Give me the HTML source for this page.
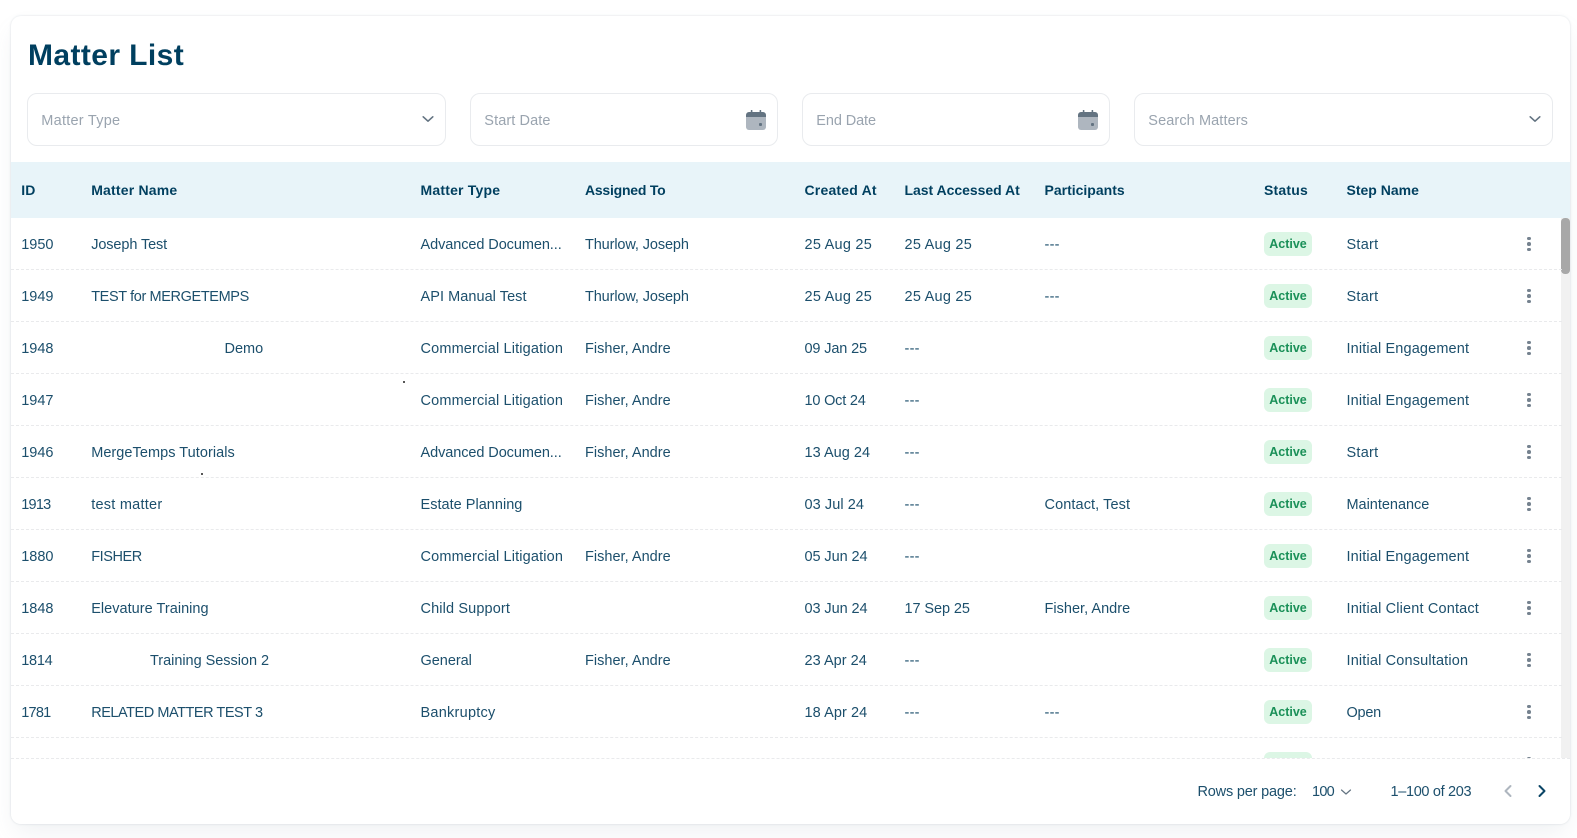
<!DOCTYPE html>
<html lang="en">
<head>
<meta charset="utf-8">
<title>Matter List</title>
<style>
*{box-sizing:border-box}
html,body{margin:0;padding:0;width:1577px;height:838px;overflow:hidden;background:#fff;font-family:"Liberation Sans",sans-serif;color:#1c4f6c}
.card{position:absolute;left:10.5px;top:15.5px;width:1559px;height:808px;background:#fff;border-radius:10px;box-shadow:0 0 2px rgba(145,158,171,.35),0 12px 24px -4px rgba(145,158,171,.14)}
h1{position:absolute;left:28px;top:38px;margin:0;font-size:30px;line-height:36px;font-weight:700;color:#003f5f;letter-spacing:.4px}
.f{position:absolute;top:93px;height:53px;border:1px solid #e9ebee;border-radius:10px;background:#fff}
.f span{position:absolute;left:13.3px;top:17px;font-size:14.5px;line-height:20px;color:#9aa4af;letter-spacing:.25px;white-space:nowrap}
.f svg{position:absolute}
.head{position:absolute;left:10.5px;top:162px;width:1559px;height:56px;background:#e8f4f9}
.t{position:absolute;white-space:nowrap;font-size:14.5px;line-height:20px;letter-spacing:.25px}
.head .t{top:18px;font-weight:700;font-size:14px;color:#003f5f;letter-spacing:.2px}
.body{position:absolute;left:10.5px;top:218px;width:1559px;height:540px;overflow:hidden}
.track{position:absolute;right:0;top:0;width:8.5px;height:540px;background:#f1f1f1}
.thumb{position:absolute;left:0;top:0;width:8.5px;height:56px;border-radius:4px;background:#a8a8a8}
.r{position:absolute;left:0;width:1551px;height:52px;border-bottom:1px dashed #e9eaec}
.r .t{top:17px}
.chip{position:absolute;left:1253.5px;top:14px;width:48px;height:24px;border-radius:6px;background:#dcf6e5;color:#1a9058;font-size:12.5px;font-weight:700;line-height:24px;text-align:center;letter-spacing:0}
.dots{position:absolute;left:1516.7px;top:18.5px;width:3.6px;height:15px}
.dots i{position:absolute;left:0;width:3.6px;height:3.6px;border-radius:50%;background:#75828f}
.dots i:nth-child(1){top:0}.dots i:nth-child(2){top:5.5px}.dots i:nth-child(3){top:11px}
.c1{left:10.7px}.c2{left:80.7px}.c3{left:410px}.c4{left:574.5px}.c5{left:794px}.c6{left:894px}.c7{left:1034px}.c9{left:1336px}
.foot{position:absolute;left:10.5px;top:758px;width:1559px;height:65.5px;background:#fff;border-top:1px dashed #e9eaec;border-radius:0 0 10px 10px}
.foot .t{top:23px}
.foot svg{position:absolute}
.spk{position:absolute;width:2px;height:2px;background:#222;border-radius:50%}
/* fine letter-spacing adjustments */
.a{letter-spacing:-.11px}.b{letter-spacing:-.38px}.d{letter-spacing:0}.e{letter-spacing:.05px}.g{letter-spacing:-.42px}.h{letter-spacing:.03px}.k{letter-spacing:-.03px}.l{letter-spacing:-.46px}
.ad{letter-spacing:-.08px}.cl{letter-spacing:.15px}.es{letter-spacing:.02px}.cs{letter-spacing:.13px}.th{letter-spacing:-.12px}.fa{letter-spacing:.02px}
.n1{letter-spacing:-.14px}.n2{letter-spacing:-.19px}.n3{letter-spacing:.08px}.n4{letter-spacing:-.08px}
.ie{letter-spacing:.14px}.ma{letter-spacing:-.02px}.ic{letter-spacing:.16px}.op{letter-spacing:-.25px}
.i0{letter-spacing:0}.i1{letter-spacing:-.75px}.i2{letter-spacing:-.25px}
</style>
</head>
<body>
<div class="card"></div>
<h1>Matter List</h1>

<div class="f" style="left:27px;width:419px"><span>Matter Type</span>
<svg style="left:394px;top:19px" width="12" height="12" viewBox="0 0 12 12"><path d="M1.2 3.8 6 8.2l4.8-4.4" fill="none" stroke="#637381" stroke-width="1.6" stroke-linecap="round" stroke-linejoin="round"/></svg></div>

<div class="f" style="left:470px;width:308px"><span style="letter-spacing:.1px">Start Date</span>
<svg style="left:275px;top:15.5px" width="20" height="21" viewBox="0 0 20 21"><path d="M0 7h20v10a3 3 0 0 1-3 3H3a3 3 0 0 1-3-3z" fill="#aeb6bf"/><path d="M0 7V5a3 3 0 0 1 3-3h1.8V.6a.8.8 0 0 1 1.6 0V2h7.2V.6a.8.8 0 0 1 1.6 0V2H17a3 3 0 0 1 3 3v2z" fill="#637381"/><rect x="13" y="13" width="3" height="3" rx="1" fill="#637381"/></svg></div>

<div class="f" style="left:802px;width:308px"><span style="letter-spacing:-.1px">End Date</span>
<svg style="left:275px;top:15.5px" width="20" height="21" viewBox="0 0 20 21"><path d="M0 7h20v10a3 3 0 0 1-3 3H3a3 3 0 0 1-3-3z" fill="#aeb6bf"/><path d="M0 7V5a3 3 0 0 1 3-3h1.8V.6a.8.8 0 0 1 1.6 0V2h7.2V.6a.8.8 0 0 1 1.6 0V2H17a3 3 0 0 1 3 3v2z" fill="#637381"/><rect x="13" y="13" width="3" height="3" rx="1" fill="#637381"/></svg></div>

<div class="f" style="left:1134px;width:419px"><span style="letter-spacing:.1px">Search Matters</span>
<svg style="left:394px;top:19px" width="12" height="12" viewBox="0 0 12 12"><path d="M1.2 3.8 6 8.2l4.8-4.4" fill="none" stroke="#637381" stroke-width="1.6" stroke-linecap="round" stroke-linejoin="round"/></svg></div>

<div class="head">
<span class="t c1">ID</span><span class="t c2">Matter Name</span><span class="t c3">Matter Type</span><span class="t c4" style="letter-spacing:-.23px">Assigned To</span><span class="t c5">Created At</span><span class="t c6" style="letter-spacing:-.03px">Last Accessed At</span><span class="t c7" style="letter-spacing:0">Participants</span><span class="t" style="left:1253.5px">Status</span><span class="t c9" style="letter-spacing:0">Step Name</span>
</div>

<div class="body">
<div class="track"><div class="thumb"></div></div>

<div class="r" style="top:0"><span class="t c1 i0">1950</span><span class="t c2 a">Joseph Test</span><span class="t c3 ad">Advanced Documen...</span><span class="t c4 th">Thurlow, Joseph</span><span class="t c5">25 Aug 25</span><span class="t c6">25 Aug 25</span><span class="t c7">---</span><span class="chip">Active</span><span class="t c9">Start</span><span class="dots"><i></i><i></i><i></i></span></div>

<div class="r" style="top:52px"><span class="t c1 i0">1949</span><span class="t c2 b">TEST for MERGETEMPS</span><span class="t c3 e">API Manual Test</span><span class="t c4 th">Thurlow, Joseph</span><span class="t c5">25 Aug 25</span><span class="t c6">25 Aug 25</span><span class="t c7">---</span><span class="chip">Active</span><span class="t c9">Start</span><span class="dots"><i></i><i></i><i></i></span></div>

<div class="r" style="top:104px"><span class="t c1 i0">1948</span><span class="t d" style="left:214px">Demo</span><span class="t c3 cl">Commercial Litigation</span><span class="t c4 fa">Fisher, Andre</span><span class="t c5 n1">09 Jan 25</span><span class="t c6">---</span><span class="chip">Active</span><span class="t c9 ie">Initial Engagement</span><span class="dots"><i></i><i></i><i></i></span></div>

<div class="r" style="top:156px"><span class="t c1 i0">1947</span><span class="t c3 cl">Commercial Litigation</span><span class="t c4 fa">Fisher, Andre</span><span class="t c5 n2">10 Oct 24</span><span class="t c6">---</span><span class="chip">Active</span><span class="t c9 ie">Initial Engagement</span><span class="dots"><i></i><i></i><i></i></span></div>

<div class="r" style="top:208px"><span class="t c1 i0">1946</span><span class="t c2 e">MergeTemps Tutorials</span><span class="t c3 ad">Advanced Documen...</span><span class="t c4 fa">Fisher, Andre</span><span class="t c5 h">13 Aug 24</span><span class="t c6">---</span><span class="chip">Active</span><span class="t c9">Start</span><span class="dots"><i></i><i></i><i></i></span></div>

<div class="r" style="top:260px"><span class="t c1 i1">1913</span><span class="t c2">test matter</span><span class="t c3 es">Estate Planning</span><span class="t c5 n3">03 Jul 24</span><span class="t c6">---</span><span class="t c7" style="letter-spacing:.1px">Contact, Test</span><span class="chip">Active</span><span class="t c9 ma">Maintenance</span><span class="dots"><i></i><i></i><i></i></span></div>

<div class="r" style="top:312px"><span class="t c1 i0">1880</span><span class="t c2 g">FISHER</span><span class="t c3 cl">Commercial Litigation</span><span class="t c4 fa">Fisher, Andre</span><span class="t c5 n4">05 Jun 24</span><span class="t c6">---</span><span class="chip">Active</span><span class="t c9 ie">Initial Engagement</span><span class="dots"><i></i><i></i><i></i></span></div>

<div class="r" style="top:364px"><span class="t c1 i0">1848</span><span class="t c2 h">Elevature Training</span><span class="t c3 cs">Child Support</span><span class="t c5 n4">03 Jun 24</span><span class="t c6 n4">17 Sep 25</span><span class="t c7 fa">Fisher, Andre</span><span class="chip">Active</span><span class="t c9 ic">Initial Client Contact</span><span class="dots"><i></i><i></i><i></i></span></div>

<div class="r" style="top:416px"><span class="t c1 i2">1814</span><span class="t k" style="left:139.500px">Training Session 2</span><span class="t c3 k">General</span><span class="t c4 fa">Fisher, Andre</span><span class="t c5 h">23 Apr 24</span><span class="t c6">---</span><span class="chip">Active</span><span class="t c9 ic">Initial Consultation</span><span class="dots"><i></i><i></i><i></i></span></div>

<div class="r" style="top:468px"><span class="t c1 i1">1781</span><span class="t c2 l">RELATED MATTER TEST 3</span><span class="t c3">Bankruptcy</span><span class="t c5 n3">18 Apr 24</span><span class="t c6">---</span><span class="t c7">---</span><span class="chip">Active</span><span class="t c9 op">Open</span><span class="dots"><i></i><i></i><i></i></span></div>

<div class="r" style="top:520px"><span class="chip">Active</span><span class="dots"><i></i><i></i><i></i></span></div>
</div>

<span class="spk" style="left:403px;top:381px"></span>
<span class="spk" style="left:201px;top:473px"></span>

<div class="foot">
<span class="t" style="left:1187px;letter-spacing:-.18px">Rows per page:</span>
<span class="t" style="left:1301.500px;letter-spacing:-.75px">100</span>
<svg style="left:1329px;top:27px" width="12" height="12" viewBox="0 0 12 12"><path d="M1.500 4 6 8l4.500-4" fill="none" stroke="#637381" stroke-width="1.200" stroke-linecap="round" stroke-linejoin="round"/></svg>
<span class="t" style="left:1380px;letter-spacing:-.33px">1–100 of 203</span>
<svg style="left:1491px;top:25px" width="12" height="14" viewBox="0 0 12 14"><path d="M8.500 2 3.500 7l5 5" fill="none" stroke="#aeb6bf" stroke-width="2" stroke-linecap="round" stroke-linejoin="round"/></svg>
<svg style="left:1525px;top:25px" width="12" height="14" viewBox="0 0 12 14"><path d="M3.500 2l5 5-5 5" fill="none" stroke="#0b4566" stroke-width="2" stroke-linecap="round" stroke-linejoin="round"/></svg>
</div>
</body>
</html>
